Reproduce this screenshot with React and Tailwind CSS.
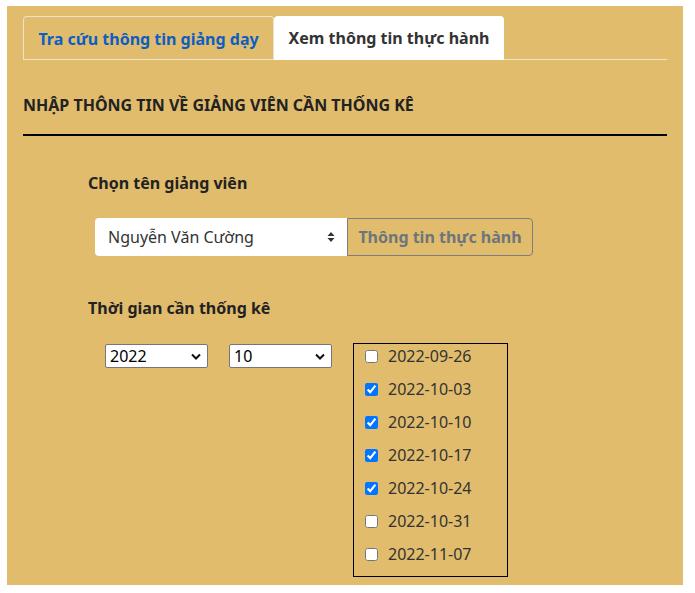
import React from "react";

const dates = [
  ["2022-09-26", false],
  ["2022-10-03", true],
  ["2022-10-10", true],
  ["2022-10-17", true],
  ["2022-10-24", true],
  ["2022-10-31", false],
  ["2022-11-07", false],
];

export default function App() {
  return (
    <div className="bg-white w-[695px] h-[593px] pt-[6px] pl-[7px]" style={{ fontFamily: '"Noto Sans", sans-serif' }}>
      <div className="bg-[#e0bc6c] w-[676px] h-[579px] pt-[10px] px-[16px] text-[#212529]">
        <div className="flex border-b border-[#eee3c8] h-[44px]">
          <div className="w-[251px] h-[44px] border border-[#eee3c8] border-b-0 rounded-t-[4px] flex items-center justify-center font-bold text-[16px] text-[#0d5ec2]">
            Tra cứu thông tin giảng dạy
          </div>
          <div className="w-[230px] h-[44px] bg-white rounded-t-[4px] flex items-center justify-center font-bold text-[16px] text-[#333]">
            Xem thông tin thực hành
          </div>
        </div>
        <div className="pt-[33px] font-bold text-[16px] leading-[24px] text-[#222]">
          NHẬP THÔNG TIN VỀ GIẢNG VIÊN CẦN THỐNG KÊ
        </div>
        <div className="mt-[17px] h-[2px] bg-black" />
        <div className="pl-[65px]">
          <div className="pt-[35px] font-bold text-[16px] leading-[24px] text-[#222]">Chọn tên giảng viên</div>
          <div className="flex mt-[23px] ml-[7px]">
            <div className="w-[252px] h-[38px] bg-white rounded-l-[4px] flex items-center justify-between pl-[13px] pr-[12px] text-[16px] text-[#333]">
              <span>Nguyễn Văn Cường</span>
              <svg width="8" height="12" viewBox="0 0 8 12">
                <path d="M4 1 L7.5 5 H0.5 Z" fill="#333" />
                <path d="M4 11 L7.5 7 H0.5 Z" fill="#333" />
              </svg>
            </div>
            <div className="w-[186px] h-[38px] border border-[#7e7e7e] rounded-r-[4px] flex items-center justify-center font-bold text-[16px] text-[#6c757d]">
              Thông tin thực hành
            </div>
          </div>
          <div className="pt-[40px] font-bold text-[16px] leading-[24px] text-[#222]">Thời gian cần thống kê</div>
          <div className="flex mt-[23px] ml-[17px]">
            <div className="w-[103px] h-[24px] bg-white border border-[#767676] rounded-[2px] mt-[1px] flex items-center justify-between pl-[4px] pr-[6px] text-[16px] text-black">
              <span>2022</span>
              <svg width="10" height="7" viewBox="0 0 10 7"><path d="M1 1.5 L5 5.5 L9 1.5" stroke="#111" strokeWidth="2" fill="none" /></svg>
            </div>
            <div className="w-[103px] h-[24px] bg-white border border-[#767676] rounded-[2px] mt-[1px] ml-[21px] flex items-center justify-between pl-[4px] pr-[6px] text-[16px] text-black">
              <span>10</span>
              <svg width="10" height="7" viewBox="0 0 10 7"><path d="M1 1.5 L5 5.5 L9 1.5" stroke="#111" strokeWidth="2" fill="none" /></svg>
            </div>
            <div className="ml-[21px] w-[155px] h-[234px] border border-black pl-[11px] pt-[3px] flex flex-col gap-[15px]">
              {dates.map(([d, c]) => (
                <div key={d} className="flex items-center h-[18px]">
                  <input type="checkbox" defaultChecked={c} className="w-[13px] h-[13px] m-0 accent-[#0075ff]" />
                  <span className="ml-[10px] text-[16px] text-[#333]">{d}</span>
                </div>
              ))}
            </div>
          </div>
        </div>
      </div>
    </div>
  );
}
